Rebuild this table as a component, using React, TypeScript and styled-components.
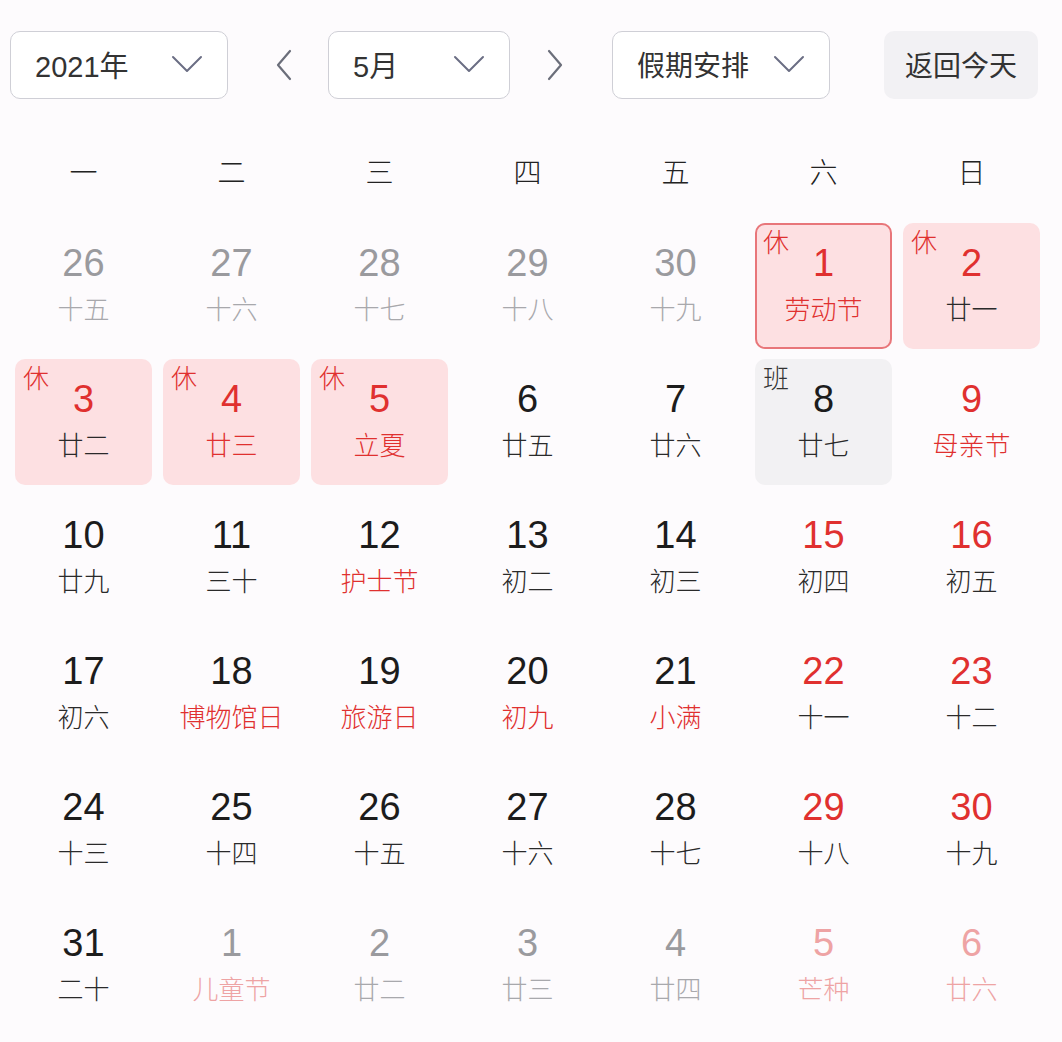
import React from "react";
import styled, { createGlobalStyle } from "styled-components";

const Global = createGlobalStyle`
  html, body { margin: 0; padding: 0; background: #fdfbfd; }
  body { font-family: "Liberation Sans", "Noto Sans CJK SC", sans-serif; color: #222; }
`;

const RED = "#e0302f";

const Page = styled.div`
  width: 1062px;
  height: 1042px;
  background: #fdfbfd;
  padding-top: 31px;
  box-sizing: border-box;
  overflow: hidden;
`;

const Toolbar = styled.div`
  display: flex;
  align-items: center;
  height: 68px;
  padding-left: 10px;
`;

const Select = styled.div<{ $w: number }>`
  width: ${(p) => p.$w}px;
  height: 68px;
  box-sizing: border-box;
  border: 1px solid #cfcfd6;
  border-radius: 10px;
  background: #fff;
  display: flex;
  align-items: center;
  justify-content: space-between;
  padding: 0 24px 2px 24px;
  font-family: "Liberation Sans", "Noto Sans CJK SC", sans-serif;
  font-size: 29px;
  color: #333;
`;

const SelectLabel = styled.span<{ $cjk?: boolean }>`
  font-family: ${(p) => (p.$cjk ? '"Noto Sans CJK SC", sans-serif' : '"Liberation Sans", "Noto Sans CJK SC", sans-serif')};
  font-size: ${(p) => (p.$cjk ? 28 : 29)}px;
`;

const NavArrow = styled.div<{ $w: number; $shift: number }>`
  width: ${(p) => p.$w}px;
  height: 68px;
  display: flex;
  align-items: center;
  justify-content: center;
  box-sizing: border-box;
  padding-left: ${(p) => (p.$shift > 0 ? p.$shift * 2 : 0)}px;
  padding-right: ${(p) => (p.$shift < 0 ? -p.$shift * 2 : 0)}px;
`;

const TodayButton = styled.div`
  margin-left: 54px;
  width: 154px;
  height: 68px;
  border-radius: 10px;
  background: #f2f1f4;
  display: flex;
  align-items: center;
  justify-content: center;
  padding-bottom: 2px;
  box-sizing: border-box;
  font-family: "Noto Sans CJK SC", sans-serif;
  font-size: 28px;
  color: #333;
`;

const Weekdays = styled.div`
  display: grid;
  grid-template-columns: repeat(7, 137px);
  column-gap: 11px;
  margin: 47px 0 0 15px;
  height: 50px;
  align-items: center;
`;

const Weekday = styled.div`
  text-align: center;
  font-family: "Noto Sans CJK SC", sans-serif;
  font-weight: 300;
  font-size: 28px;
  line-height: 50px;
  color: #222;
`;

const Grid = styled.div`
  display: grid;
  grid-template-columns: repeat(7, 137px);
  grid-auto-rows: 126px;
  column-gap: 11px;
  row-gap: 10px;
  margin: 27px 0 0 15px;
`;

type Kind = "none" | "rest" | "restToday" | "work";

const Cell = styled.div<{ $kind: Kind }>`
  position: relative;
  border-radius: 10px;
  display: flex;
  flex-direction: column;
  align-items: center;
  padding-top: 18px;
  box-sizing: border-box;
  background: ${(p) =>
    p.$kind === "rest" || p.$kind === "restToday"
      ? "#fde0e2"
      : p.$kind === "work"
      ? "#f2f1f3"
      : "transparent"};
  box-shadow: ${(p) => (p.$kind === "restToday" ? "inset 0 0 0 2px #e8767a" : "none")};
`;

const DayNum = styled.div<{ $color: string }>`
  font-family: "Liberation Sans", sans-serif;
  font-size: 38px;
  line-height: 44px;
  color: ${(p) => p.$color};
`;

const Lunar = styled.div<{ $color: string }>`
  margin-top: 5px;
  font-family: "Noto Sans CJK SC", sans-serif;
  font-weight: 300;
  font-size: 26px;
  line-height: 36px;
  color: ${(p) => p.$color};
  white-space: nowrap;
`;

const Badge = styled.span<{ $color: string }>`
  position: absolute;
  top: 3px;
  left: 8px;
  font-family: "Noto Sans CJK SC", sans-serif;
  font-weight: 300;
  font-size: 26px;
  line-height: 30px;
  color: ${(p) => p.$color};
`;

const Chevron = () => (
  <svg width="32" height="18" viewBox="0 0 32 18" fill="none">
    <path d="M2 2 L16 16 L30 2" stroke="#6b6e84" strokeWidth="2" strokeLinecap="round" strokeLinejoin="round" />
  </svg>
);

const Arrow = ({ dir }: { dir: "left" | "right" }) => (
  <svg width="18" height="32" viewBox="0 0 18 32" fill="none">
    <path
      d={dir === "left" ? "M15 2 L3 16 L15 30" : "M3 2 L15 16 L3 30"}
      stroke="#6b6e7a"
      strokeWidth="2.2"
      strokeLinecap="round"
      strokeLinejoin="round"
    />
  </svg>
);

type Day = {
  n: number;
  l: string;
  nc: string;
  lc: string;
  kind?: Kind;
  badge?: string;
};

const BLACK = "#1c1c1c";
const LBLACK = "#2a2a2a";
const GRAY = "#9a9a9e";
const LGRAY = "#a8a8ac";
const PINK = "#eea3a4";

const days: Day[] = [
  { n: 26, l: "十五", nc: GRAY, lc: LGRAY },
  { n: 27, l: "十六", nc: GRAY, lc: LGRAY },
  { n: 28, l: "十七", nc: GRAY, lc: LGRAY },
  { n: 29, l: "十八", nc: GRAY, lc: LGRAY },
  { n: 30, l: "十九", nc: GRAY, lc: LGRAY },
  { n: 1, l: "劳动节", nc: RED, lc: RED, kind: "restToday", badge: "休" },
  { n: 2, l: "廿一", nc: RED, lc: LBLACK, kind: "rest", badge: "休" },
  { n: 3, l: "廿二", nc: RED, lc: LBLACK, kind: "rest", badge: "休" },
  { n: 4, l: "廿三", nc: RED, lc: RED, kind: "rest", badge: "休" },
  { n: 5, l: "立夏", nc: RED, lc: RED, kind: "rest", badge: "休" },
  { n: 6, l: "廿五", nc: BLACK, lc: LBLACK },
  { n: 7, l: "廿六", nc: BLACK, lc: LBLACK },
  { n: 8, l: "廿七", nc: BLACK, lc: LBLACK, kind: "work", badge: "班" },
  { n: 9, l: "母亲节", nc: RED, lc: RED },
  { n: 10, l: "廿九", nc: BLACK, lc: LBLACK },
  { n: 11, l: "三十", nc: BLACK, lc: LBLACK },
  { n: 12, l: "护士节", nc: BLACK, lc: RED },
  { n: 13, l: "初二", nc: BLACK, lc: LBLACK },
  { n: 14, l: "初三", nc: BLACK, lc: LBLACK },
  { n: 15, l: "初四", nc: RED, lc: LBLACK },
  { n: 16, l: "初五", nc: RED, lc: LBLACK },
  { n: 17, l: "初六", nc: BLACK, lc: LBLACK },
  { n: 18, l: "博物馆日", nc: BLACK, lc: RED },
  { n: 19, l: "旅游日", nc: BLACK, lc: RED },
  { n: 20, l: "初九", nc: BLACK, lc: RED },
  { n: 21, l: "小满", nc: BLACK, lc: RED },
  { n: 22, l: "十一", nc: RED, lc: LBLACK },
  { n: 23, l: "十二", nc: RED, lc: LBLACK },
  { n: 24, l: "十三", nc: BLACK, lc: LBLACK },
  { n: 25, l: "十四", nc: BLACK, lc: LBLACK },
  { n: 26, l: "十五", nc: BLACK, lc: LBLACK },
  { n: 27, l: "十六", nc: BLACK, lc: LBLACK },
  { n: 28, l: "十七", nc: BLACK, lc: LBLACK },
  { n: 29, l: "十八", nc: RED, lc: LBLACK },
  { n: 30, l: "十九", nc: RED, lc: LBLACK },
  { n: 31, l: "二十", nc: BLACK, lc: LBLACK },
  { n: 1, l: "儿童节", nc: GRAY, lc: PINK },
  { n: 2, l: "廿二", nc: GRAY, lc: LGRAY },
  { n: 3, l: "廿三", nc: GRAY, lc: LGRAY },
  { n: 4, l: "廿四", nc: GRAY, lc: LGRAY },
  { n: 5, l: "芒种", nc: PINK, lc: PINK },
  { n: 6, l: "廿六", nc: PINK, lc: PINK },
];

const weekdays = ["一", "二", "三", "四", "五", "六", "日"];

export default function App() {
  return (
    <Page>
      <Global />
      <Toolbar>
        <Select $w={218}>
          <SelectLabel>2021年</SelectLabel>
          <Chevron />
        </Select>
        <NavArrow $w={100} $shift={6}>
          <Arrow dir="left" />
        </NavArrow>
        <Select $w={182}>
          <SelectLabel>5月</SelectLabel>
          <Chevron />
        </Select>
        <NavArrow $w={102} $shift={-6}>
          <Arrow dir="right" />
        </NavArrow>
        <Select $w={218}>
          <SelectLabel $cjk>假期安排</SelectLabel>
          <Chevron />
        </Select>
        <TodayButton>返回今天</TodayButton>
      </Toolbar>
      <Weekdays>
        {weekdays.map((w) => (
          <Weekday key={w}>{w}</Weekday>
        ))}
      </Weekdays>
      <Grid>
        {days.map((d, i) => (
          <Cell key={i} $kind={d.kind ?? "none"}>
            {d.badge && <Badge $color={d.badge === "休" ? RED : "#333"}>{d.badge}</Badge>}
            <DayNum $color={d.nc}>{d.n}</DayNum>
            <Lunar $color={d.lc}>{d.l}</Lunar>
          </Cell>
        ))}
      </Grid>
    </Page>
  );
}
